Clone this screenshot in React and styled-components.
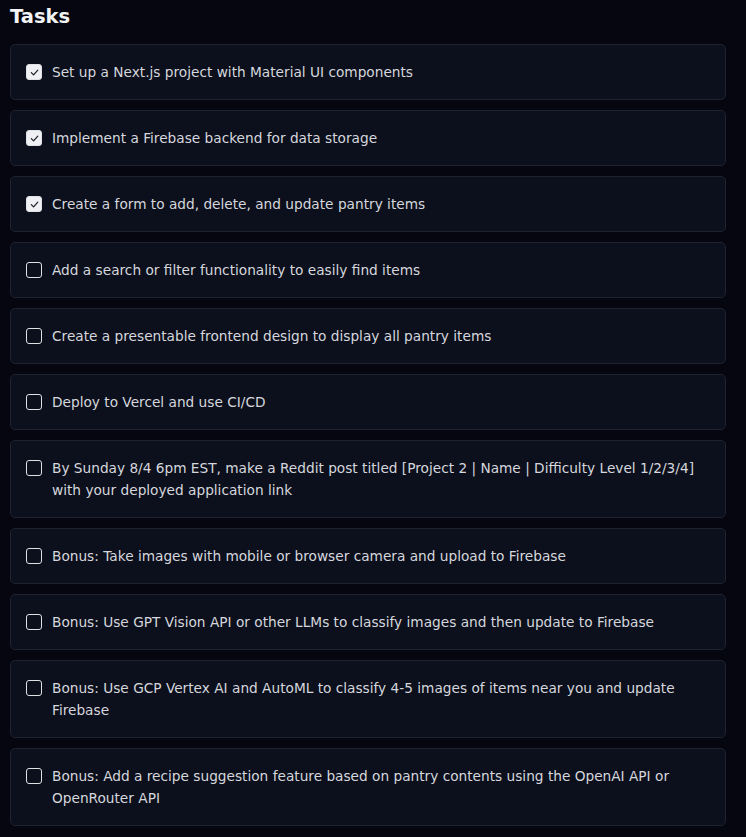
import styled, { createGlobalStyle } from 'styled-components';

const GlobalStyle = createGlobalStyle`
  body {
    margin: 0;
    background: #05060f;
    font-family: "DejaVu Sans", "Noto Sans", sans-serif;
  }
`;

const tasks = [
  { text: 'Set up a Next.js project with Material UI components', done: true },
  { text: 'Implement a Firebase backend for data storage', done: true },
  { text: 'Create a form to add, delete, and update pantry items', done: true },
  { text: 'Add a search or filter functionality to easily find items', done: false },
  { text: 'Create a presentable frontend design to display all pantry items', done: false },
  { text: 'Deploy to Vercel and use CI/CD', done: false },
  { text: 'By Sunday 8/4 6pm EST, make a Reddit post titled [Project 2 | Name | Difficulty Level 1/2/3/4] with your deployed application link', done: false },
  { text: 'Bonus: Take images with mobile or browser camera and upload to Firebase', done: false },
  { text: 'Bonus: Use GPT Vision API or other LLMs to classify images and then update to Firebase', done: false },
  { text: 'Bonus: Use GCP Vertex AI and AutoML to classify 4-5 images of items near you and update Firebase', done: false },
  { text: 'Bonus: Add a recipe suggestion feature based on pantry contents using the OpenAI API or OpenRouter API', done: false },
];

const App = () => {
  return (
    <Page>
      <GlobalStyle />
      <Title>Tasks</Title>
      <List>
        {tasks.map((task) => (
          <Card key={task.text}>
            <Box $checked={task.done}>
              {task.done && (
                <svg width="11" height="11" viewBox="0 0 12 12" fill="none">
                  <path d="M2.5 6.2 L5 8.6 L9.6 3.4" stroke="#1a1d29" strokeWidth="1.3" strokeLinecap="round" strokeLinejoin="round" />
                </svg>
              )}
            </Box>
            <Label>{task.text}</Label>
          </Card>
        ))}
      </List>
    </Page>
  );
};

const Page = styled.div`
  padding: 4px 20px 10px 10px;
`;

const Title = styled.h2`
  margin: 0 0 14px;
  font-size: 19.5px;
  font-weight: 700;
  color: #f2f3f5;
  line-height: 26px;
`;

const List = styled.div`
  display: flex;
  flex-direction: column;
  gap: 10px;
`;

const Card = styled.div`
  display: flex;
  align-items: flex-start;
  gap: 10px;
  padding: 16px 16px 16px 15px;
  background: #0c0f1c;
  border: 1px solid #1e2332;
  border-radius: 5px;
`;

const Box = styled.span`
  flex: none;
  width: 16px;
  height: 16px;
  margin-top: 3px;
  box-sizing: border-box;
  border-radius: 3px;
  border: 1.5px solid #dfe1e6;
  background: ${(p) => (p.$checked ? '#eef0f3' : 'transparent')};
  display: flex;
  align-items: center;
  justify-content: center;
`;

const Label = styled.span`
  font-size: 13.7px;
  line-height: 22px;
  color: #d5d7dd;
`;

export default App;
